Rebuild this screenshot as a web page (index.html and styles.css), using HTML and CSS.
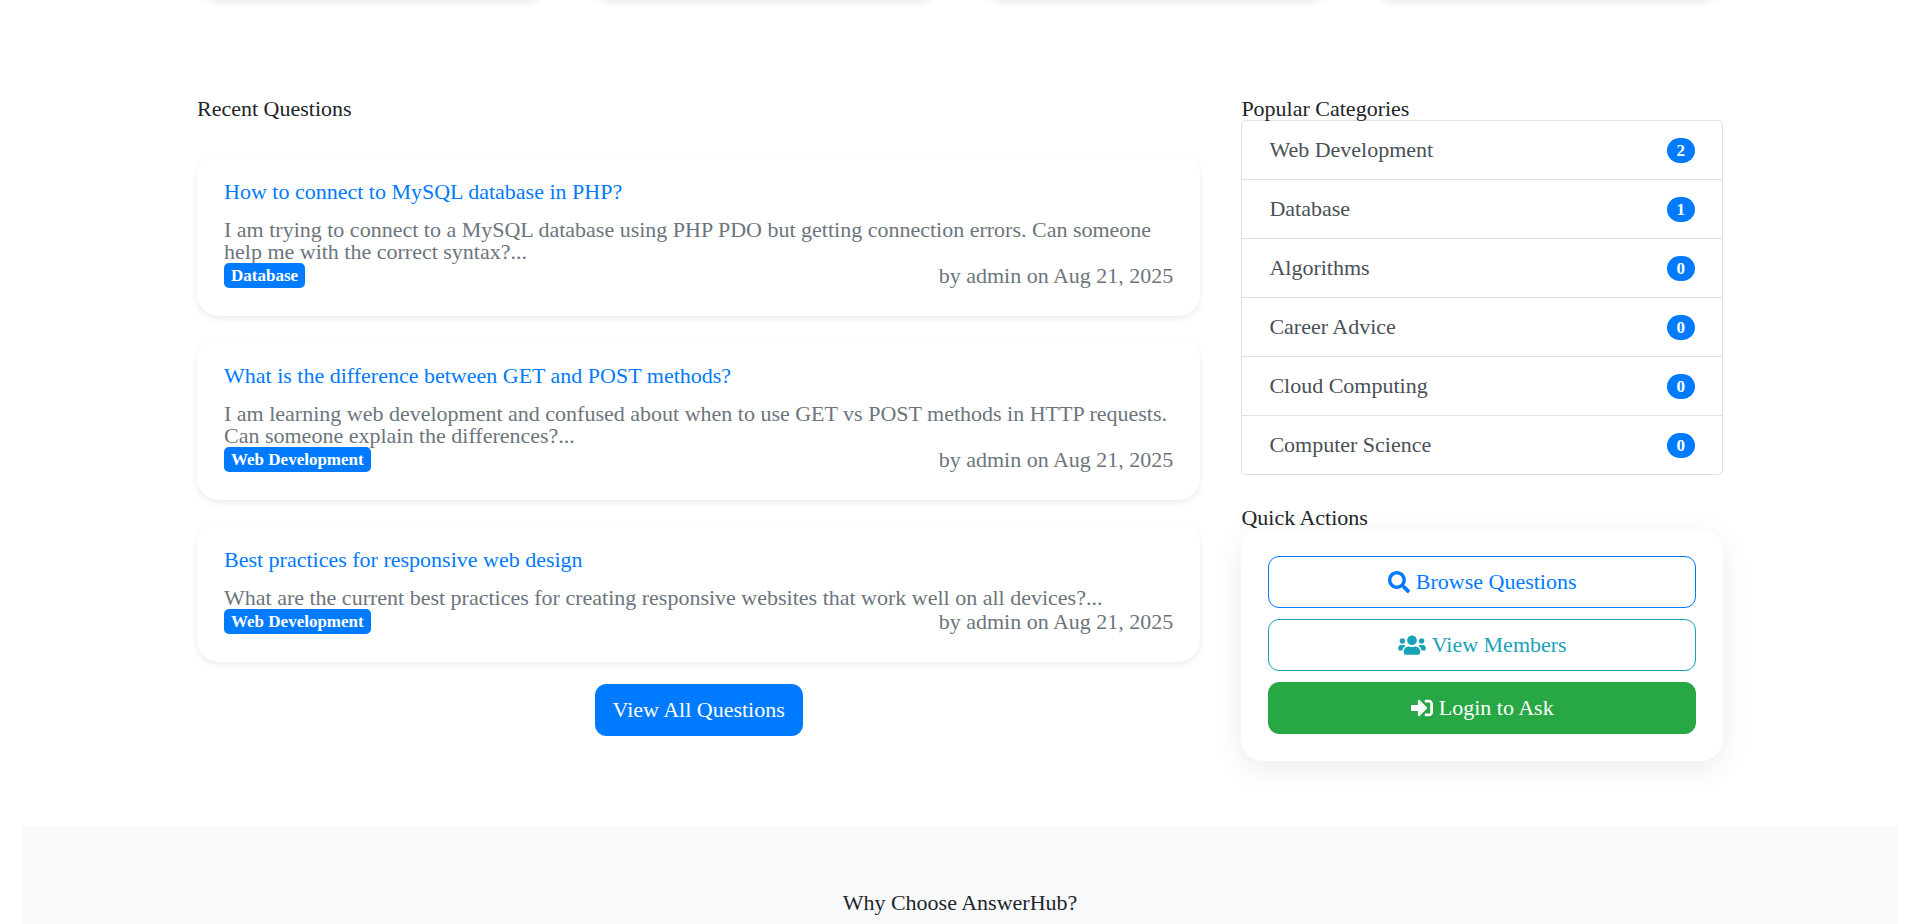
FILE: index.html
```html
<!DOCTYPE html>
<html lang="en">
<head>
    <meta charset="UTF-8">
    <meta name="viewport" content="width=device-width, initial-scale=1.0">
    <title>AnswerHub</title>
    <link rel="stylesheet" href="styles.css">
</head>
<body>
    <!-- Statistics -->
    <section class="container stats">
        <div class="stat-card"></div>
        <div class="stat-card"></div>
        <div class="stat-card"></div>
        <div class="stat-card"></div>
    </section>

    <main class="container content">
        <!-- Recent questions -->
        <section class="questions">
            <h2>Recent Questions</h2>
            <div class="question-list">
                <article class="question-card">
                    <h3><a href="#">How to connect to MySQL database in PHP?</a></h3>
                    <p>I am trying to connect to a MySQL database using PHP PDO but getting connection errors. Can someone help me with the correct syntax?...</p>
                    <div class="question-meta">
                        <span class="badge">Database</span>
                        <span>by admin on Aug 21, 2025</span>
                    </div>
                </article>
                <article class="question-card">
                    <h3><a href="#">What is the difference between GET and POST methods?</a></h3>
                    <p>I am learning web development and confused about when to use GET vs POST methods in HTTP requests. Can someone explain the differences?...</p>
                    <div class="question-meta">
                        <span class="badge">Web Development</span>
                        <span>by admin on Aug 21, 2025</span>
                    </div>
                </article>
                <article class="question-card">
                    <h3><a href="#">Best practices for responsive web design</a></h3>
                    <p>What are the current best practices for creating responsive websites that work well on all devices?...</p>
                    <div class="question-meta">
                        <span class="badge">Web Development</span>
                        <span>by admin on Aug 21, 2025</span>
                    </div>
                </article>
            </div>
            <div class="view-all">
                <a href="#" class="btn btn-primary">View All Questions</a>
            </div>
        </section>

        <!-- Sidebar -->
        <aside class="sidebar">
            <h2>Popular Categories</h2>
            <div class="list-group">
                <a href="#" class="list-item">Web Development <span class="badge badge-pill">2</span></a>
                <a href="#" class="list-item">Database <span class="badge badge-pill">1</span></a>
                <a href="#" class="list-item">Algorithms <span class="badge badge-pill">0</span></a>
                <a href="#" class="list-item">Career Advice <span class="badge badge-pill">0</span></a>
                <a href="#" class="list-item">Cloud Computing <span class="badge badge-pill">0</span></a>
                <a href="#" class="list-item">Computer Science <span class="badge badge-pill">0</span></a>
            </div>

            <h2>Quick Actions</h2>
            <div class="actions-card">
                <a href="#" class="btn btn-outline-primary">
                    <svg class="icon" viewBox="0 0 512 512" aria-hidden="true"><path d="M505 442.7L405.3 343c-4.5-4.5-10.6-7-17-7H372c27.6-35.3 44-79.7 44-128C416 93.1 322.9 0 208 0S0 93.1 0 208s93.1 208 208 208c48.3 0 92.7-16.4 128-44v16.3c0 6.4 2.5 12.5 7 17l99.7 99.7c9.4 9.4 24.6 9.4 33.9 0l28.3-28.3c9.4-9.4 9.4-24.6.1-34zM208 336c-70.7 0-128-57.2-128-128 0-70.7 57.2-128 128-128 70.7 0 128 57.2 128 128 0 70.7-57.2 128-128 128z"/></svg>
                    Browse Questions
                </a>
                <a href="#" class="btn btn-outline-info">
                    <svg class="icon icon-wide" viewBox="0 0 640 512" aria-hidden="true"><path d="M96 224c35.3 0 64-28.7 64-64s-28.7-64-64-64-64 28.7-64 64 28.7 64 64 64zm448 0c35.3 0 64-28.7 64-64s-28.7-64-64-64-64 28.7-64 64 28.7 64 64 64zm32 32h-64c-17.6 0-33.5 7.1-45.1 18.6 40.3 22.1 68.9 62 75.1 109.4h66c17.7 0 32-14.3 32-32v-32c0-35.3-28.7-64-64-64zm-256 0c61.9 0 112-50.1 112-112S381.9 32 320 32 208 82.1 208 144s50.1 112 112 112zm76.8 32h-8.3c-20.8 10-43.9 16-68.5 16s-47.6-6-68.5-16h-8.3C179.6 288 128 339.6 128 403.2V432c0 26.5 21.5 48 48 48h288c26.5 0 48-21.5 48-48v-28.8c0-63.6-51.6-115.2-115.2-115.2zm-223.7-13.4C161.5 263.1 145.6 256 128 256H64c-35.3 0-64 28.7-64 64v32c0 17.7 14.3 32 32 32h65.9c6.3-47.4 34.9-87.3 75.2-109.4z"/></svg>
                    View Members
                </a>
                <a href="#" class="btn btn-success">
                    <svg class="icon" viewBox="0 0 512 512" aria-hidden="true"><path d="M416 448h-84c-6.6 0-12-5.4-12-12v-40c0-6.6 5.4-12 12-12h84c17.7 0 32-14.3 32-32V160c0-17.7-14.3-32-32-32h-84c-6.6 0-12-5.4-12-12V76c0-6.6 5.4-12 12-12h84c53 0 96 43 96 96v192c0 53-43 96-96 96zm-47-209L201 71c-15-15-41-4.5-41 17v96H24c-13.3 0-24 10.7-24 24v96c0 13.3 10.7 24 24 24h136v96c0 21.5 26 32 41 17l168-168c9.3-9.4 9.3-24.6 0-34z"/></svg>
                    Login to Ask
                </a>
            </div>
        </aside>
    </main>

    <!-- Features -->
    <section class="features">
        <h2>Why Choose AnswerHub?</h2>
    </section>
</body>
</html>
```

FILE: styles.css
```css
* {
    box-sizing: border-box;
}

body {
    font-family: "Liberation Serif", "Times New Roman", serif;
    font-size: 22px;
    line-height: 22px;
    color: #212529;
    background-color: #fff;
    margin: 0 22px;
    overflow-x: hidden;
}

h2, h3, p {
    font-size: 22px;
    font-weight: 400;
    margin: 0;
}

a {
    color: #007bff;
    text-decoration: none;
}

.container {
    max-width: 1526px;
    margin: 0 auto;
}

/* Statistics */
.stats {
    display: grid;
    grid-template-columns: repeat(4, 1fr);
    gap: 41px;
    margin-top: -160px;
}

.stat-card {
    height: 160px;
    background: #fff;
    border-radius: 22px;
    box-shadow: 0 3px 6px rgba(0, 0, 0, 0.075);
}

/* Main content */
.content {
    display: grid;
    grid-template-columns: 25fr 12fr;
    gap: 41px;
    padding: 98px 0 65px;
}

.question-list {
    display: flex;
    flex-direction: column;
    gap: 21px;
    margin-top: 33px;
}

.question-card {
    padding: 28px 27px;
    background: #fff;
    border-radius: 22px;
    box-shadow: 0 3px 6px rgba(0, 0, 0, 0.075);
}

.question-card p {
    margin-top: 16px;
    color: #6c757d;
}

.question-meta {
    display: flex;
    justify-content: space-between;
    align-items: center;
    color: #6c757d;
}

.badge {
    padding: 4px 7px;
    font-size: 17px;
    font-weight: 700;
    line-height: 17px;
    color: #fff;
    background: #007bff;
    border-radius: 5px;
}

.badge-pill {
    padding: 4px 10px;
    border-radius: 50px;
}

.view-all {
    display: flex;
    justify-content: center;
    margin-top: 22px;
}

/* Buttons */
.btn {
    display: flex;
    justify-content: center;
    align-items: center;
    gap: 6px;
    padding: 14px 17px;
    border: 1px solid;
    border-radius: 11px;
}

.btn-primary {
    color: #fff;
    background: #007bff;
    border-color: #007bff;
}

.btn-outline-primary {
    color: #007bff;
}

.btn-outline-info {
    color: #17a2b8;
}

.btn-success {
    color: #fff;
    background: #28a745;
    border-color: #28a745;
}

.icon {
    width: 22px;
    height: 22px;
    fill: currentColor;
}

.icon-wide {
    width: 28px;
}

/* Sidebar */
.list-group {
    margin-bottom: 32px;
    border: 1px solid #dfdfdf;
    border-radius: 5px;
}

.list-item {
    display: flex;
    justify-content: space-between;
    align-items: center;
    padding: 18px 27px;
    color: #495057;
}

.list-item + .list-item {
    border-top: 1px solid #dfdfdf;
}

.list-item .badge {
    margin: -2px 0;
}

.actions-card {
    display: flex;
    flex-direction: column;
    gap: 11px;
    padding: 27px;
    background: #fff;
    border-radius: 22px;
    box-shadow: 0 8px 30px rgba(0, 0, 0, 0.08);
}

/* Features */
.features {
    padding: 66px 0;
    text-align: center;
    background: #f8f9fb;
}
```
